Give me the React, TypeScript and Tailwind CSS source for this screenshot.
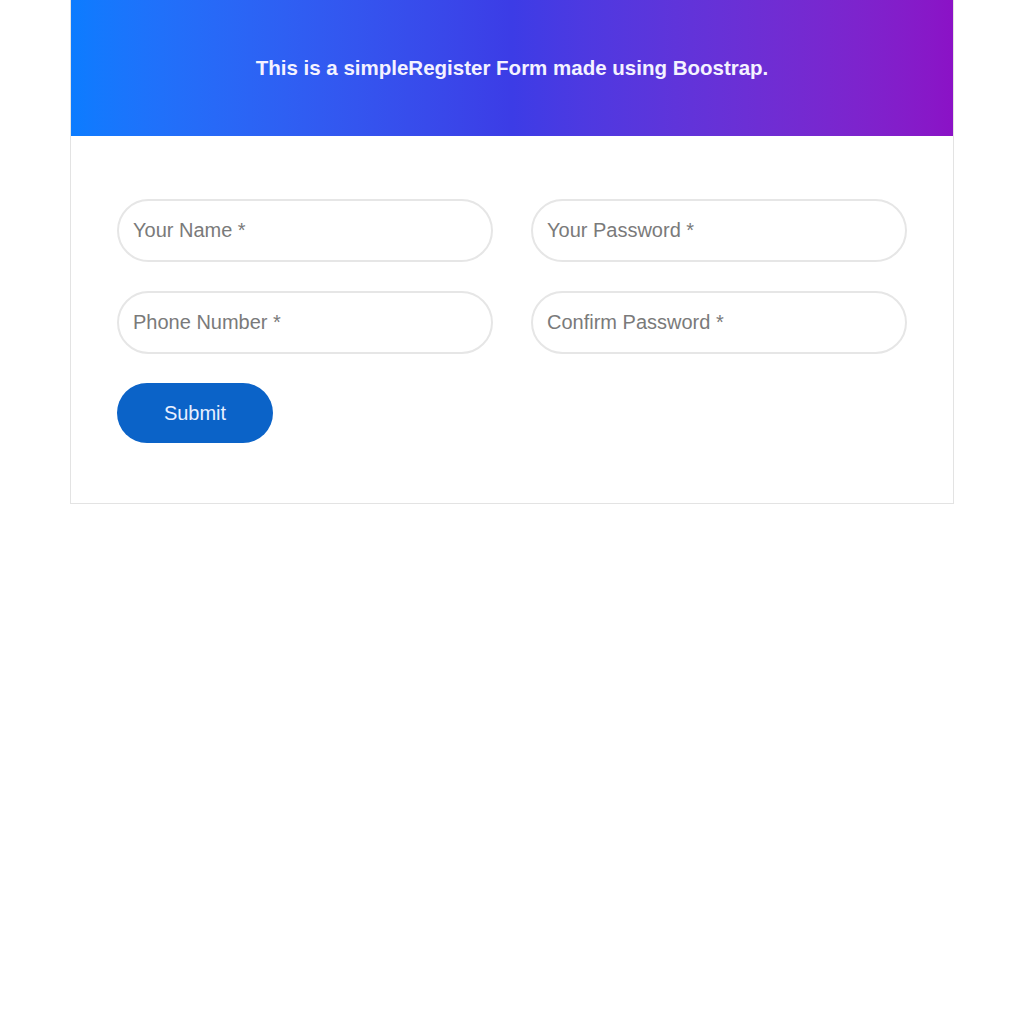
export default function App() {
  return (
    <div className="min-h-screen bg-white" style={{ fontFamily: '"Liberation Sans", Arial, sans-serif' }}>
      <div className="mx-auto w-[884px] border border-t-0 border-[#e3e3e3] bg-white">
        <div className="flex h-[136px] items-center justify-center bg-gradient-to-r from-[#0b7cff] via-[#3c3ce6] to-[#8b12c6]">
          <p className="text-[20.5px] font-bold text-[#f4f2ff]">
            This is a simpleRegister Form made using Boostrap.
          </p>
        </div>
        <form className="px-[46px] pt-[63px] pb-[60px]">
          <div className="grid grid-cols-2 gap-x-[38px] gap-y-[29px]">
            {["Your Name *", "Your Password *", "Phone Number *", "Confirm Password *"].map((p) => (
              <input
                key={p}
                type={p.includes("Password") ? "password" : "text"}
                placeholder={p}
                className="h-[63px] w-full rounded-full border-2 border-[#e6e6e6] px-[14px] text-[20px] text-[#555] placeholder:text-[#7a7a7a] outline-none"
              />
            ))}
          </div>
          <button
            type="submit"
            className="mt-[29px] h-[60px] w-[156px] rounded-full bg-[#0b63c8] text-[20px] text-[#e8f0ff]"
          >
            Submit
          </button>
        </form>
      </div>
    </div>
  );
}
